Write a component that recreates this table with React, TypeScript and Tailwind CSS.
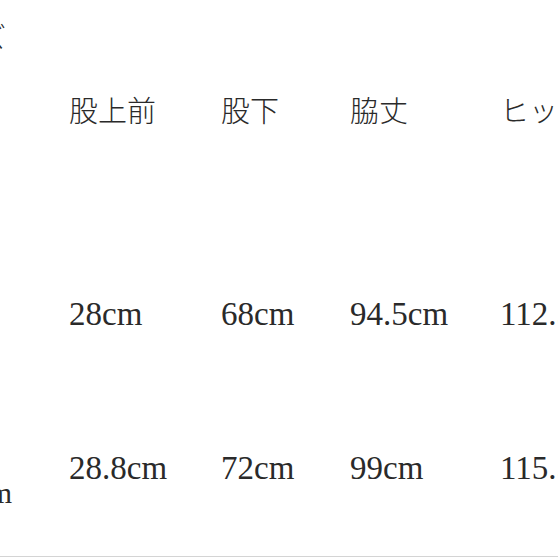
import React from 'react';

const headers = ['股上前', '股下', '脇丈', 'ヒップ'];
const rows = [
  ['28cm', '68cm', '94.5cm', '112.5cm'],
  ['28.8cm', '72cm', '99cm', '115.5cm'],
];

const jp = "font-['Noto_Sans_CJK_JP',sans-serif]";
const serif = "font-['Liberation_Serif','Noto_Sans_CJK_JP',serif]";

const App: React.FC = () => {
  return (
    <div className="w-[558px] h-[558px] bg-white overflow-hidden flex flex-col">
      <div className="flex-1 overflow-hidden">
        <div className="-ml-[48px] grid grid-cols-[60px_209px_129px_150px_150px] grid-rows-[220px_190px_118px] text-[#2a2a2a]">
          {/* header row */}
          <div className={`flex justify-end pt-[22px] pr-[6px] text-[28px] font-light leading-none whitespace-nowrap ${jp}`}>
            サイズ
          </div>
          {headers.map((h, i) => (
            <div
              key={h}
              className={`flex items-center text-[29px] font-light whitespace-nowrap ${jp} ${i === 0 ? 'pl-[57px]' : ''}`}
            >
              {h}
            </div>
          ))}

          {/* size 1 */}
          <div />
          {rows[0].map((v, i) => (
            <div key={v} className={`flex items-center text-[33px] whitespace-nowrap ${serif} ${i === 0 ? 'pl-[57px]' : ''}`}>
              {v}
            </div>
          ))}

          {/* size 2 */}
          <div className={`flex justify-end items-start pt-[68px] text-[30px] leading-none whitespace-nowrap ${serif}`}>
            cm
          </div>
          {rows[1].map((v, i) => (
            <div key={v} className={`flex items-center text-[33px] whitespace-nowrap ${serif} ${i === 0 ? 'pl-[57px]' : ''}`}>
              {v}
            </div>
          ))}
        </div>
      </div>
      <div className="h-px bg-[#d4d4d4] mb-px" />
    </div>
  );
};

export default App;
